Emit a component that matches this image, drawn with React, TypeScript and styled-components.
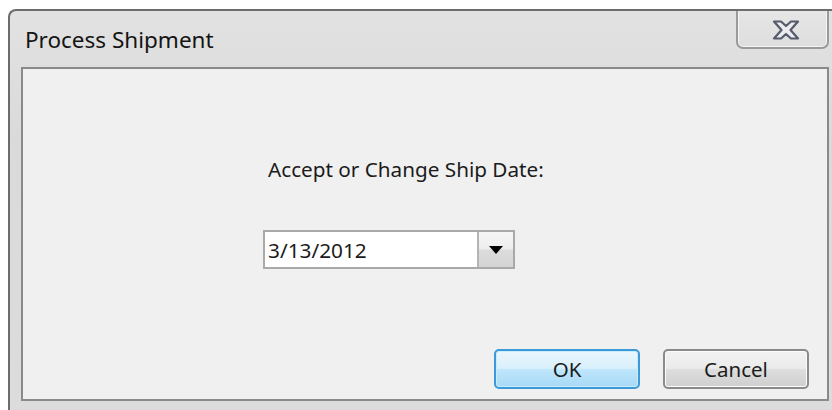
import React from 'react';
import styled, { createGlobalStyle } from 'styled-components';

const GlobalStyle = createGlobalStyle`
  html, body {
    margin: 0;
    padding: 0;
    background: #ffffff;
    overflow: hidden;
    width: 832px;
    height: 410px;
  }

  body {
    font-family: 'Noto Sans', 'Open Sans', sans-serif;
    color: #1b1b1b;
  }
`;

const Frame = styled.div`
  box-sizing: border-box;
  margin: 9px 0 0 8px;
  width: 840px;
  height: 420px;
  padding: 0 0 0 11px;
  border: 2px solid #6c6c6c;
  border-right: none;
  border-bottom: none;
  border-radius: 8px 0 0 0;
  background: linear-gradient(180deg, #e2e2e2 0%, #dadada 30%, #dcdcdc 100%);
  display: flex;
  flex-direction: column;
`;

const TitleBar = styled.div`
  height: 56px;
  width: 808px;
  display: flex;
  align-items: flex-start;
  justify-content: space-between;
`;

const Title = styled.span`
  margin: 15px 0 0 4px;
  font-size: 22.5px;
  line-height: 28px;
  color: #141414;
`;

const CloseButton = styled.button`
  box-sizing: border-box;
  width: 93px;
  height: 38px;
  margin: 0;
  padding: 2px 0 0 6px;
  border: 2px solid #9a9a9a;
  border-top: none;
  border-radius: 0 0 7px 7px;
  background: linear-gradient(180deg, #e6e6e6 0%, #dedede 100%);
  display: flex;
  align-items: center;
  justify-content: center;
  box-shadow: inset 0 -1px 0 #f4f4f4, inset 1px 0 0 #f4f4f4, inset -1px 0 0 #f4f4f4;
`;

const Panel = styled.div`
  box-sizing: border-box;
  width: 808px;
  height: 334px;
  border: 2px solid #8a8a8a;
  background: #f0f0f0;
  display: flex;
  flex-direction: column;
  padding: 0 18px 10px 240px;
`;

const Prompt = styled.div`
  margin-top: 87px;
  padding-left: 5px;
  font-size: 20.7px;
  line-height: 26px;
`;

const DatePicker = styled.div`
  box-sizing: border-box;
  margin-top: 48px;
  width: 252px;
  height: 39px;
  border: 2px solid #a9a9a9;
  background: #ffffff;
  display: flex;
`;

const DateValue = styled.span`
  flex: 1;
  padding: 4px 0 0 3px;
  font-size: 20.8px;
  line-height: 28px;
`;

const DropButton = styled.div`
  width: 34px;
  border-left: 2px solid #b4b4b4;
  background: linear-gradient(180deg, #f6f6f6 0%, #ededed 48%, #dcdcdc 52%, #d4d4d4 100%);
  display: flex;
  align-items: center;
  justify-content: center;
`;

const Footer = styled.div`
  margin-top: auto;
  display: flex;
  justify-content: flex-end;
  gap: 23px;
`;

const DialogButton = styled.button<{ $primary?: boolean }>`
  box-sizing: border-box;
  width: 146px;
  height: 40px;
  border-radius: 5px;
  font-family: inherit;
  font-size: 20.5px;
  color: #1b1b1b;
  padding: 0;
  border: 2px solid ${({ $primary }) => ($primary ? '#3c9ad9' : '#8a8a8a')};
  background: ${({ $primary }) =>
    $primary
      ? 'linear-gradient(180deg, #eaf6fd 0%, #d9f0fc 48%, #bee6fd 52%, #a7d9f5 100%)'
      : 'linear-gradient(180deg, #f2f2f2 0%, #ebebeb 48%, #dddddd 52%, #cfcfcf 100%)'};
  box-shadow: inset 0 0 0 1px ${({ $primary }) => ($primary ? '#c9ecfd' : '#fcfcfc')};
`;

function CloseGlyph () {
  return (
    <svg width='28' height='20' viewBox='0 0 28 20'>
      <polygon
        points='2,1.5 9,1.5 14,6 19,1.5 26,1.5 18.5,10 26,18.5 19,18.5 14,14 9,18.5 2,18.5 9.5,10'
        fill='#ececef'
        stroke='#555b6b'
        strokeWidth='2.2'
        strokeLinejoin='round'
      />
    </svg>
  );
}

function Caret () {
  return (
    <svg width='14' height='8' viewBox='0 0 14 8'>
      <polygon points='0,0 14,0 7,8' fill='#000000' />
    </svg>
  );
}

export default function App () {
  return (
    <>
      <GlobalStyle />
      <Frame>
        <TitleBar>
          <Title>Process Shipment</Title>
          <CloseButton aria-label='Close'>
            <CloseGlyph />
          </CloseButton>
        </TitleBar>
        <Panel>
          <Prompt>Accept or Change Ship Date:</Prompt>
          <DatePicker>
            <DateValue>3/13/2012</DateValue>
            <DropButton>
              <Caret />
            </DropButton>
          </DatePicker>
          <Footer>
            <DialogButton $primary>OK</DialogButton>
            <DialogButton>Cancel</DialogButton>
          </Footer>
        </Panel>
      </Frame>
    </>
  );
}
